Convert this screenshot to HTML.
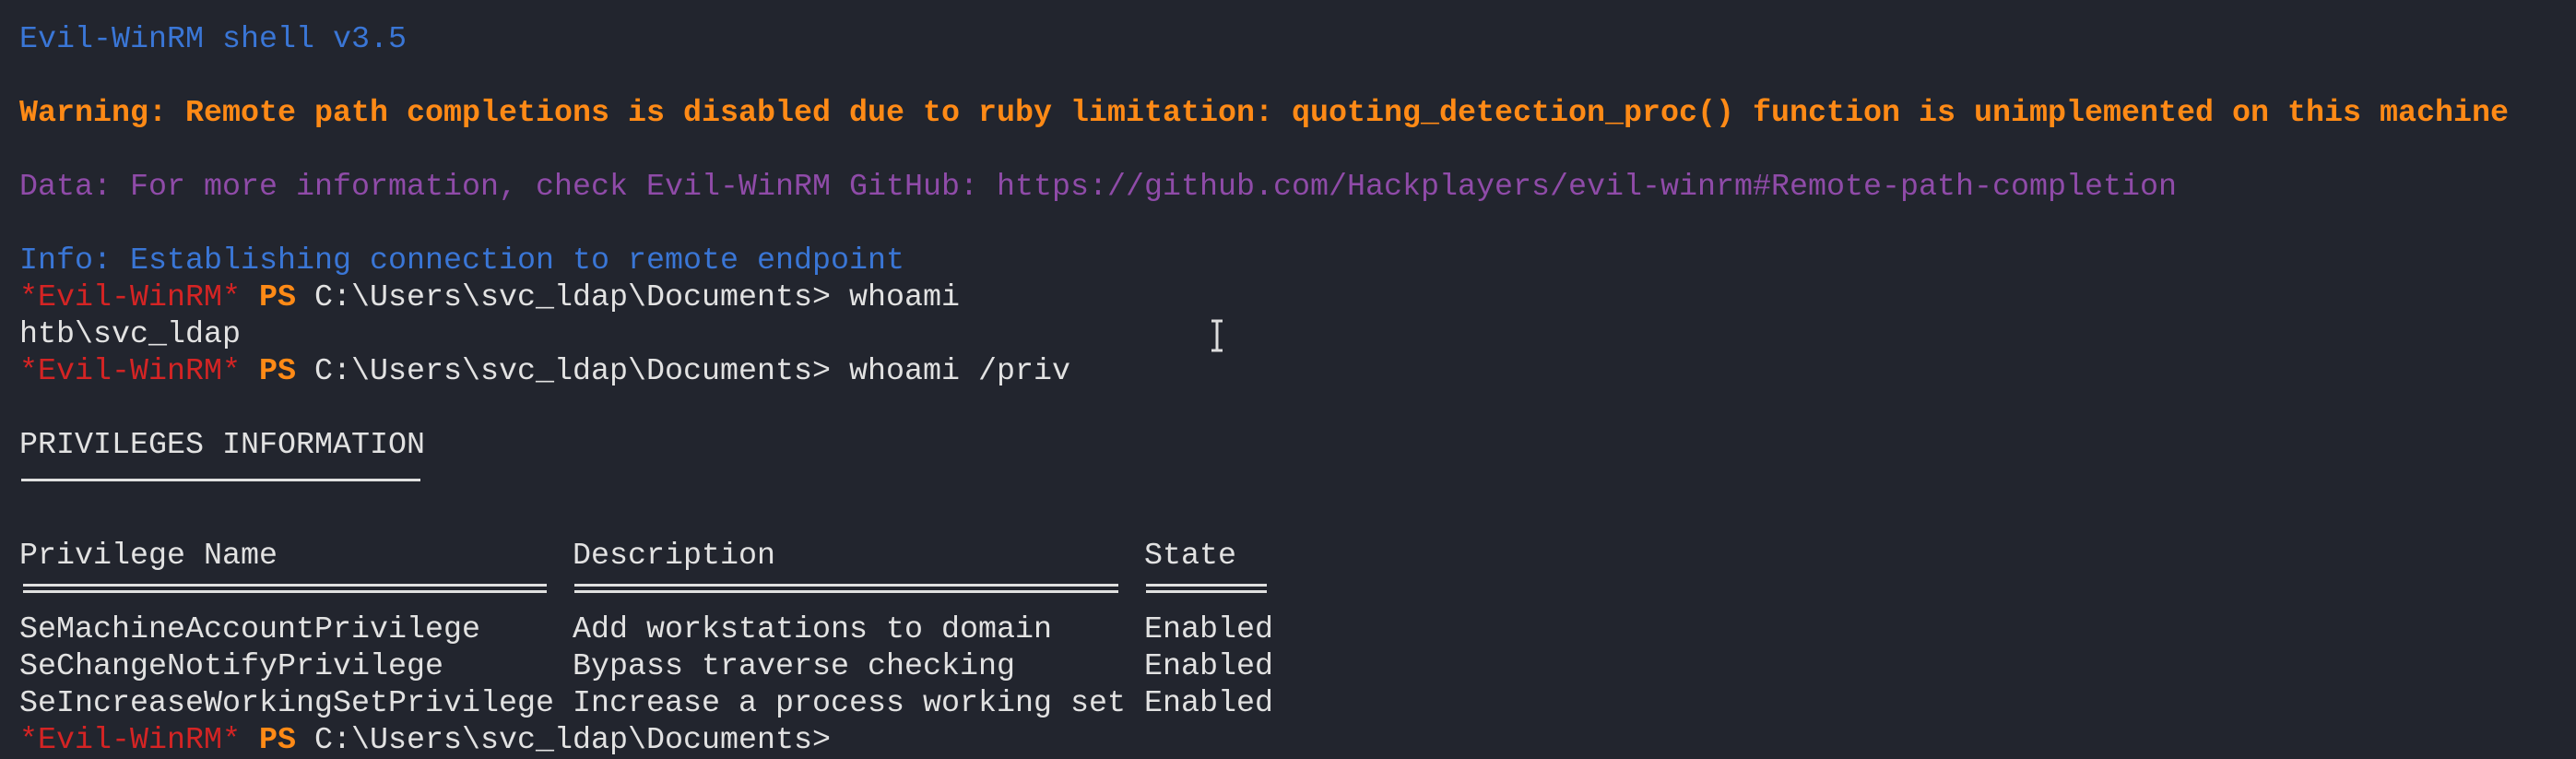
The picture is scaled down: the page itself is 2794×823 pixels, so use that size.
<!DOCTYPE html>
<html><head><meta charset="utf-8"><style>
html,body{margin:0;padding:0;background:#22252e;width:2794px;height:790px;overflow:hidden}
pre{margin:0;position:absolute;left:21px;top:23px;font-family:"Liberation Mono",monospace;font-size:33.33px;line-height:40px;color:#e2e2e2;white-space:pre}
.b{color:#3a76d6}.o{color:#ff8a16;font-weight:bold}.p{color:#8f4ba8}.r{color:#d42424}
.l{position:absolute;height:3px;background:#e0e0e0}
.d{position:absolute;height:4px;border-top:3px solid #e0e0e0;border-bottom:3px solid #e0e0e0}
</style></head><body>
<pre><span class="b">Evil-WinRM shell v3.5</span>

<span class="o">Warning: Remote path completions is disabled due to ruby limitation: quoting_detection_proc() function is unimplemented on this machine</span>

<span class="p">Data: For more information, check Evil-WinRM GitHub: https://github.com/Hackplayers/evil-winrm#Remote-path-completion</span>

<span class="b">Info: Establishing connection to remote endpoint</span>
<span class="r">*Evil-WinRM*</span> <span class="o">PS</span> C:\Users\svc_ldap\Documents&gt; whoami
htb\svc_ldap
<span class="r">*Evil-WinRM*</span> <span class="o">PS</span> C:\Users\svc_ldap\Documents&gt; whoami /priv

PRIVILEGES INFORMATION


Privilege Name                Description                    State

SeMachineAccountPrivilege     Add workstations to domain     Enabled
SeChangeNotifyPrivilege       Bypass traverse checking       Enabled
SeIncreaseWorkingSetPrivilege Increase a process working set Enabled
<span class="r">*Evil-WinRM*</span> <span class="o">PS</span> C:\Users\svc_ldap\Documents&gt;</pre>
<div class="l" style="left:23px;top:519px;width:433px"></div>
<div class="d" style="left:25px;top:633px;width:568px"></div>
<div class="d" style="left:623px;top:633px;width:590px"></div>
<div class="d" style="left:1243px;top:633px;width:131px"></div>
<svg style="position:absolute;left:1310px;top:346px" width="20" height="36"><path d="M4 2h12M10 2v32M4 34h12" stroke="#ddd" stroke-width="3" fill="none"/></svg>
</body></html>
